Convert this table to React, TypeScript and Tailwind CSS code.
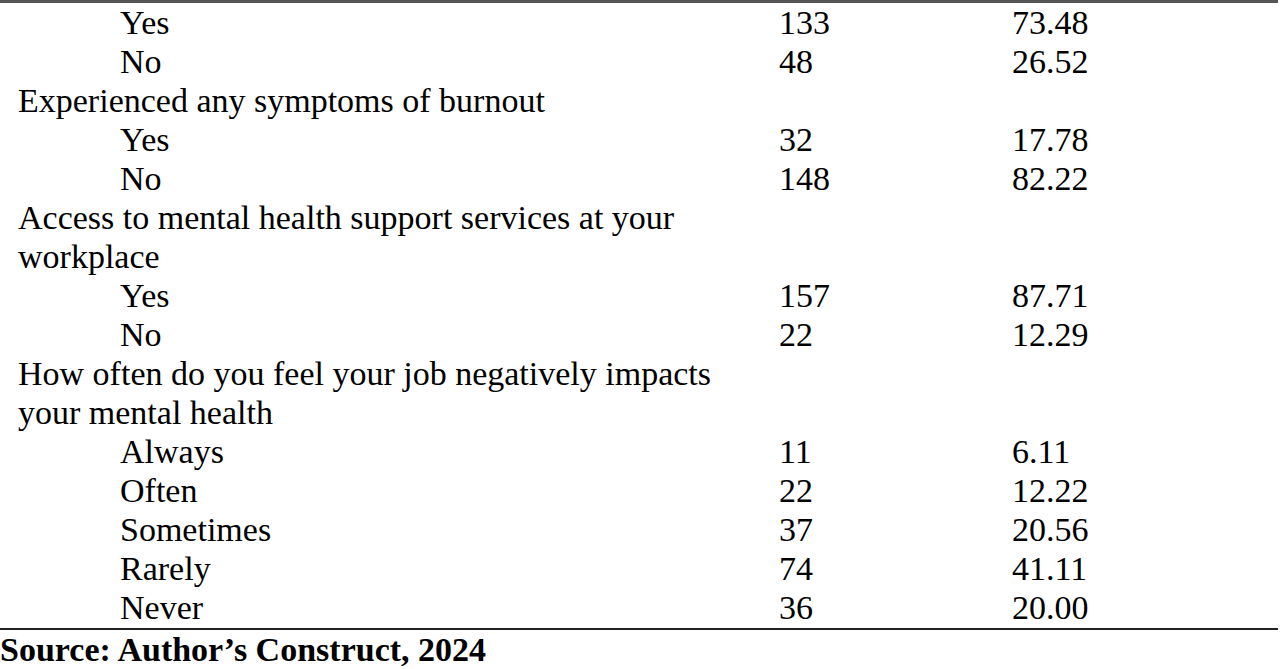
const rows: { label: string[]; n?: string; pct?: string; sub?: boolean }[] = [
  { label: ['Yes'], n: '133', pct: '73.48', sub: true },
  { label: ['No'], n: '48', pct: '26.52', sub: true },
  { label: ['Experienced any symptoms of burnout'] },
  { label: ['Yes'], n: '32', pct: '17.78', sub: true },
  { label: ['No'], n: '148', pct: '82.22', sub: true },
  { label: ['Access to mental health support services at your', 'workplace'] },
  { label: ['Yes'], n: '157', pct: '87.71', sub: true },
  { label: ['No'], n: '22', pct: '12.29', sub: true },
  { label: ['How often do you feel your job negatively impacts', 'your mental health'] },
  { label: ['Always'], n: '11', pct: '6.11', sub: true },
  { label: ['Often'], n: '22', pct: '12.22', sub: true },
  { label: ['Sometimes'], n: '37', pct: '20.56', sub: true },
  { label: ['Rarely'], n: '74', pct: '41.11', sub: true },
  { label: ['Never'], n: '36', pct: '20.00', sub: true },
]

export default function App() {
  return (
    <div className="w-[1280px] h-[669px] bg-white text-black overflow-hidden font-['Liberation_Serif',serif] text-[34px] leading-[39px]">
      <div className="w-[1278px] border-t-[3px] border-b-2 border-t-[#555] border-b-[#222]">
        <div className="grid grid-cols-[779px_233px_1fr] pb-px">
          {rows.map((r, i) => (
            <div key={i} className="contents">
              <div className={r.sub ? 'pl-[120px] whitespace-nowrap' : 'pl-[18px] whitespace-nowrap'}>
                {r.label.map((l, j) => (
                  <div key={j}>{l}</div>
                ))}
              </div>
              <div>{r.n}</div>
              <div>{r.pct}</div>
            </div>
          ))}
        </div>
      </div>
      <div className="font-bold">Source: Author’s Construct, 2024</div>
    </div>
  )
}
